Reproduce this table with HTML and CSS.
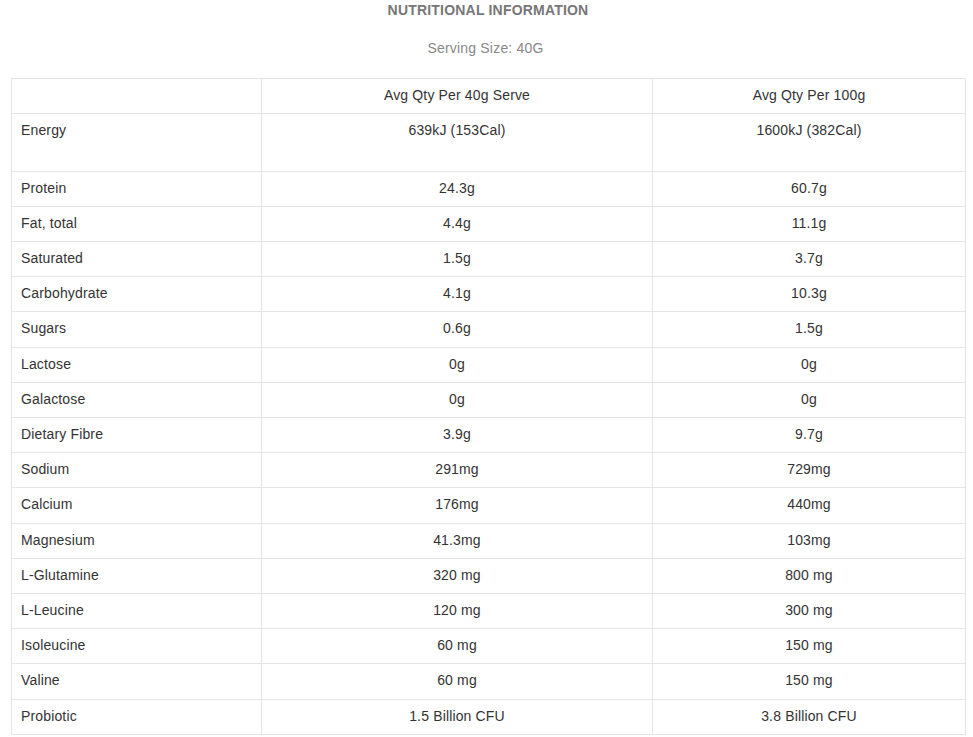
FILE: index.html
```html
<!DOCTYPE html>
<html>
<head>
<meta charset="utf-8">
<link rel="stylesheet" href="styles.css">
</head>
<body>
<div class="wrap">
  <h2 class="title">NUTRITIONAL INFORMATION</h2>
  <p class="serving">Serving Size: 40G</p>
  <table class="nutri">
    <colgroup>
      <col class="c1"><col class="c2"><col class="c3">
    </colgroup>
    <tr><td></td><td>Avg Qty Per 40g Serve</td><td>Avg Qty Per 100g</td></tr>
    <tr><td>Energy<br>&nbsp;</td><td>639kJ (153Cal)</td><td>1600kJ (382Cal)</td></tr>
    <tr><td>Protein</td><td>24.3g</td><td>60.7g</td></tr>
    <tr><td>Fat, total</td><td>4.4g</td><td>11.1g</td></tr>
    <tr><td>Saturated</td><td>1.5g</td><td>3.7g</td></tr>
    <tr><td>Carbohydrate</td><td>4.1g</td><td>10.3g</td></tr>
    <tr><td>Sugars</td><td>0.6g</td><td>1.5g</td></tr>
    <tr><td>Lactose</td><td>0g</td><td>0g</td></tr>
    <tr><td>Galactose</td><td>0g</td><td>0g</td></tr>
    <tr><td>Dietary Fibre</td><td>3.9g</td><td>9.7g</td></tr>
    <tr><td>Sodium</td><td>291mg</td><td>729mg</td></tr>
    <tr><td>Calcium</td><td>176mg</td><td>440mg</td></tr>
    <tr><td>Magnesium</td><td>41.3mg</td><td>103mg</td></tr>
    <tr><td>L-Glutamine</td><td>320 mg</td><td>800 mg</td></tr>
    <tr><td>L-Leucine</td><td>120 mg</td><td>300 mg</td></tr>
    <tr><td>Isoleucine</td><td>60 mg</td><td>150 mg</td></tr>
    <tr><td>Valine</td><td>60 mg</td><td>150 mg</td></tr>
    <tr><td>Probiotic</td><td>1.5 Billion CFU</td><td>3.8 Billion CFU</td></tr>
  </table>
</div>
</body>
</html>
```
FILE: styles.css
```css
html, body {
  margin: 0;
  padding: 0;
  background: #ffffff;
}
body {
  font-family: "Liberation Sans", Arial, sans-serif;
  font-size: 14px;
  color: #333333;
  letter-spacing: 0.15px;
}
.wrap {
  padding: 0 8px 0 11px;
}
.title {
  margin: 0;
  font-size: 14px;
  font-weight: bold;
  line-height: 20px;
  color: #777777;
  text-align: center;
  letter-spacing: 0.2px;
}
.serving {
  margin: 18px 0 20px;
  line-height: 20px;
  color: #888888;
  text-align: center;
  letter-spacing: 0.2px;
  padding-right: 5px;
}
.nutri {
  width: 954px;
  border-collapse: collapse;
  table-layout: fixed;
}
.c1 { width: 250px; }
.c2 { width: 391px; }
.c3 { width: 313px; }
.nutri td {
  border: 1px solid #e5e5e5;
  padding: 5px 9px 7px;
  line-height: 22.2px;
  vertical-align: top;
  text-align: center;
}
.nutri td:first-child {
  text-align: left;
}
```
